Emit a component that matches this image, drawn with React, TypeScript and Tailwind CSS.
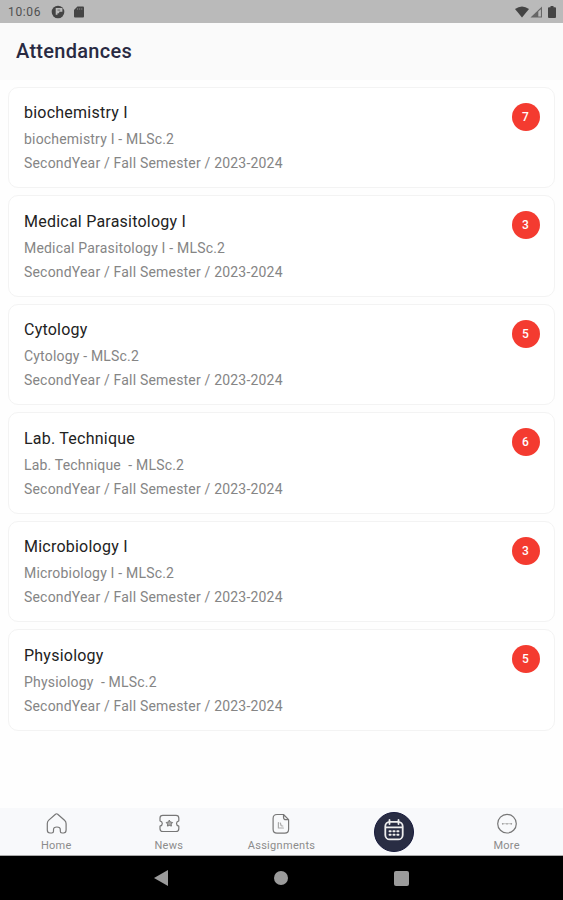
import type { ReactNode } from 'react';

type Course = { title: string; subtitle: string; count: number };

const TERM = 'SecondYear / Fall Semester / 2023-2024';

const courses: Course[] = [
  { title: 'biochemistry I', subtitle: 'biochemistry I - MLSc.2', count: 7 },
  { title: 'Medical Parasitology I', subtitle: 'Medical Parasitology I - MLSc.2', count: 3 },
  { title: 'Cytology', subtitle: 'Cytology - MLSc.2', count: 5 },
  { title: 'Lab. Technique', subtitle: 'Lab. Technique  - MLSc.2', count: 6 },
  { title: 'Microbiology I', subtitle: 'Microbiology I - MLSc.2', count: 3 },
  { title: 'Physiology', subtitle: 'Physiology  - MLSc.2', count: 5 },
];

function StatusBar() {
  return (
    <div className="flex h-[23px] shrink-0 items-center bg-[#bababa] pt-[1px] pr-[7px] pl-[8px] text-[#505050]">
      <span className="w-[43px] text-[12px] leading-none tracking-[0.65px]">10:06</span>
      <svg className="h-[14px] w-[14px]" viewBox="0 0 14 14">
        <circle cx="7" cy="7" r="6.3" fill="#444" />
        <path d="M4.700 3h6.700v3.700H8.200v1.600H6.500v1.500H4.700z" fill="#bababa" />
        <path d="M6.500 4.700h2.700v.7H6.500z" fill="#444" />
      </svg>
      <svg className="ml-[9px] h-[12px] w-[10px]" viewBox="0 0 10 12">
        <path d="M3.4.5H9a1 1 0 0 1 1 1v9a1 1 0 0 1-1 1H1a1 1 0 0 1-1-1V4z" fill="#444" />
        <path d="M3.6 2v2M5.7 2v2M7.8 2v2" stroke="#777" strokeWidth="0.9" />
      </svg>
      <div className="ml-auto flex items-center">
        <svg className="h-[12px] w-[14px]" viewBox="0 0 14 12">
          <path d="M0 3Q7-2.2 14 3L7 11.6z" fill="#444" />
        </svg>
        <svg className="ml-[1px] h-[12px] w-[13px]" viewBox="0 0 13 12">
          <path d="M.5 11.500L12 .5v11z" fill="#666" />
          <path d="M8.300 5.600L10.900 3.200v7.200H8.300z" fill="#bababa" />
        </svg>
        <svg className="ml-[5px] h-[12px] w-[8px]" viewBox="0 0 8 12">
          <path d="M2.5 0h3v1.3H7a1 1 0 0 1 1 1V11a1 1 0 0 1-1 1H1a1 1 0 0 1-1-1V2.300a1 1 0 0 1 1-1h1.500z" fill="#444" />
        </svg>
      </div>
    </div>
  );
}

function CourseCard({ course }: { course: Course }) {
  return (
    <div className="flex h-[101.600px] justify-between rounded-[10px] border border-[#f3f3f3] bg-white pt-[14.500px] pr-[14.500px] pl-[15px]">
      <div className="whitespace-pre">
        <h2 className="text-[16px] leading-[21px] tracking-[0.230px] text-[#222]">{course.title}</h2>
        <p className="mt-[5px] text-[14px] leading-[22px] tracking-[0.190px] text-[#858585]">{course.subtitle}</p>
        <p className="mt-[2px] text-[14px] leading-[23px] tracking-[0.190px] text-[#858585]">{TERM}</p>
      </div>
      <span className="mt-[0.500px] flex h-[28px] w-[28px] items-center justify-center rounded-full bg-[#f43b30] text-[12px] font-medium text-white">
        {course.count}
      </span>
    </div>
  );
}

function NavItem({ label, children }: { label: string; children: ReactNode }) {
  return (
    <div className="flex flex-1 flex-col items-center pt-[4px]">
      <svg className="h-[24px] w-[24px]" viewBox="0 0 24 24" fill="none" stroke="#777" strokeWidth="1.200" strokeLinecap="round" strokeLinejoin="round">
        {children}
      </svg>
      <span className="mt-[3px] text-[11px] leading-[14px] tracking-[0.300px] text-[#8c8c8c]">{label}</span>
    </div>
  );
}

function BottomNav() {
  return (
    <nav className="flex h-[48px] shrink-0 border-b border-[#aaa] bg-[#f8f9fb]">
      <NavItem label="Home">
        <path d="M4.800 8.100L11.500 2.200q1.100-.9 2.200 0L20.500 8.300q1.600 1.400 1.600 3.500V18q0 3-2.600 3h-1.500q-1.700 0-1.700-1.700V17.700q0-2.700-3.400-2.700t-3.400 2.700v1.600q0 1.700-1.700 1.700H6Q3.300 21 3.300 18V11.500q0-2 1.500-3.400z" />
      </NavItem>
      <NavItem label="News">
        <path d="M5.800 3.300h13.200q2.800 0 2.800 2.800v2.700q-2.300.6-2.300 2.700t2.300 2.700v2.500q0 2.800-2.800 2.800H5.800q-2.800 0-2.800-2.800v-2.500q2.300-.6 2.300-2.700T3 8.800V6.100Q3 3.300 5.800 3.300z" />
        <path d="M12.400 8.400l1 1.600 2.200.5-1.400 1.600.2 2-2-.7-2 .7.200-2-1.400-1.600 2.200-.5z" fill="#aaa" strokeWidth="1" />
      </NavItem>
      <NavItem label="Assignments">
        <path d="M14.500 2.500H8Q4.100 2.500 4.100 6.400v10.800q0 3.900 3.900 3.900h7.700q3.900 0 3.900-3.900V7.700zM14.500 2.500v2.700q0 2.500 2.500 2.500h2.600" />
        <path d="M9.400 10.500v5.500h5M11.300 11l.8 2.500M12.800 14h1" stroke="#aaa" strokeWidth="1.200" />
      </NavItem>
      <div className="flex flex-1 justify-center pt-[3.500px]">
        <div className="flex h-[40px] w-[40px] items-center justify-center rounded-full border border-[#171a3c] bg-[#292d43]">
          <svg className="-mt-[3px] h-[22px] w-[20px]" viewBox="0 0 20 22" fill="none" stroke="#eee" strokeWidth="1.800" strokeLinecap="round">
            <rect x="1.300" y="2.800" width="17.400" height="17.600" rx="4.500" />
            <path d="M5.500 1v4M14.500 1v4M2 8.300h16" />
            <path d="M5.500 12.200h1.200M9.400 12.200h1.200M13.300 12.200h1.200M5.500 15.700h1.200M9.400 15.700h1.200M13.300 15.700h1.200" strokeWidth="1.900" />
          </svg>
        </div>
      </div>
      <NavItem label="More">
        <circle cx="12" cy="11.700" r="9.300" />
        <path d="M7.600 11.700h.3M11.900 11.700h.2M16.100 11.700h.3" strokeWidth="1.500" />
        <path d="M7.600 11.700h8.800" stroke="#bbb" strokeWidth="0.900" />
      </NavItem>
    </nav>
  );
}

function SystemNav() {
  return (
    <div className="flex h-[44px] shrink-0 items-center justify-center gap-[106px] bg-black">
      <svg className="h-[16px] w-[14px]" viewBox="0 0 14 16" fill="#9b9b9b">
        <path d="M0 8L14 0v16z" />
      </svg>
      <span className="h-[14px] w-[14px] rounded-full bg-[#9b9b9b]" />
      <span className="h-[15px] w-[15px] rounded-[2px] bg-[#9b9b9b]" />
    </div>
  );
}

export default function App() {
  return (
    <div className="flex h-screen flex-col overflow-hidden bg-[#fefefe] font-['Roboto',sans-serif]">
      <StatusBar />
      <header className="flex h-[57px] shrink-0 items-center bg-[#fafafa] px-[16px] pb-[2px]">
        <h1 className="text-[20px] leading-none font-medium tracking-[0.280px] text-[#292a42]">Attendances</h1>
      </header>
      <main className="flex min-h-0 flex-1 flex-col gap-[7px] px-[8px] pt-[6.500px]">
        {courses.map((course) => (
          <CourseCard key={course.title} course={course} />
        ))}
      </main>
      <BottomNav />
      <SystemNav />
    </div>
  );
}
